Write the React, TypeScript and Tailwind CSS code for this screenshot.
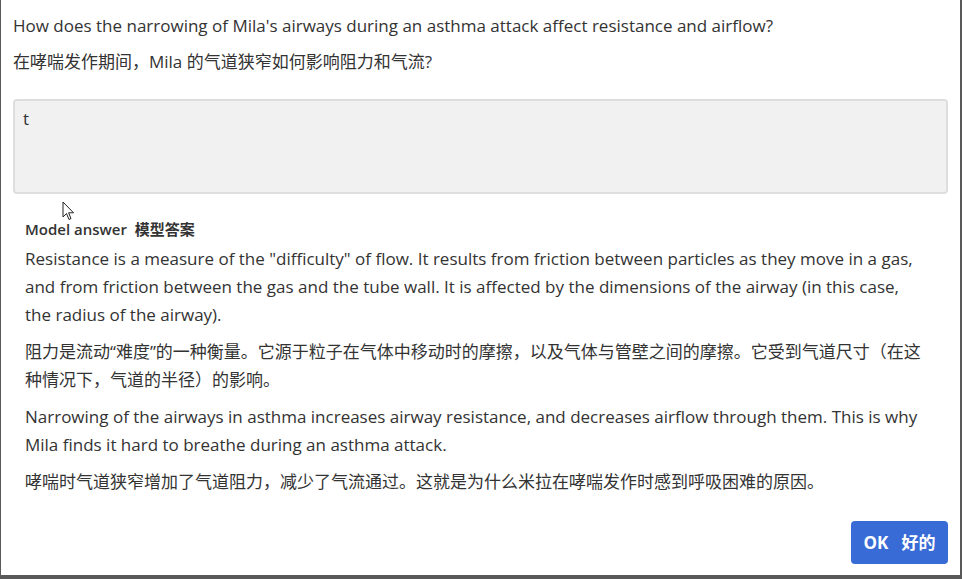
export default function App() {
  const paragraphs = [
    'Resistance is a measure of the "difficulty" of flow. It results from friction between particles as they move in a gas, and from friction between the gas and the tube wall. It is affected by the dimensions of the airway (in this case, the radius of the airway).',
    "阻力是流动“难度”的一种衡量。它源于粒子在气体中移动时的摩擦，以及气体与管壁之间的摩擦。它受到气道尺寸（在这种情况下，气道的半径）的影响。",
    "Narrowing of the airways in asthma increases airway resistance, and decreases airflow through them. This is why Mila finds it hard to breathe during an asthma attack.",
    "哮喘时气道狭窄增加了气道阻力，减少了气流通过。这就是为什么米拉在哮喘发作时感到呼吸困难的原因。",
  ]

  return (
    <div className="relative h-[579px] w-[962px] border-l border-r-2 border-b-4 border-[#595959] bg-white font-['Open_Sans','Noto_Sans_CJK_SC',sans-serif] text-[#333333]">
      <div className="flex flex-col px-3 pt-3">
        <p className="text-[17px] leading-7">
          How does the narrowing of Mila's airways during an asthma attack affect resistance and airflow?
        </p>
        <p className="mt-2 text-[17px] leading-7">在哮喘发作期间，Mila 的气道狭窄如何影响阻力和气流?</p>

        <div className="mt-[23px] h-[95px] rounded border-2 border-[#dedede] bg-[#f1f1f1] px-2 pt-[6px] text-[17px] leading-6">
          t
        </div>

        <div className="pl-3 pr-6">
          <h3 className="mt-[25px] text-[15px] font-semibold leading-5">Model answer&nbsp; 模型答案</h3>
          <div className="mt-[6px]">
            {paragraphs.map((text, i) => (
              <p key={i} className="mb-[9px] text-[17px] leading-7">
                {text}
              </p>
            ))}
          </div>
        </div>

        <div className="mt-4 flex justify-end">
          <button className="flex h-[43px] w-[97px] items-center justify-center gap-[13px] rounded bg-[#386bd6] text-[17px] font-bold text-white">
            <span>OK</span>
            <span>好的</span>
          </button>
        </div>
      </div>

      {/* mouse pointer */}
      <svg className="absolute left-[61px] top-[201px]" width="14" height="21" viewBox="0 0 14 21">
        <path d="M1 1 L1 16 L4.5 12.5 L7 18.5 L9 17.6 L6.6 11.8 L11.5 11.8 Z" fill="white" stroke="#222" strokeWidth="1" strokeLinejoin="round" />
      </svg>
    </div>
  )
}
